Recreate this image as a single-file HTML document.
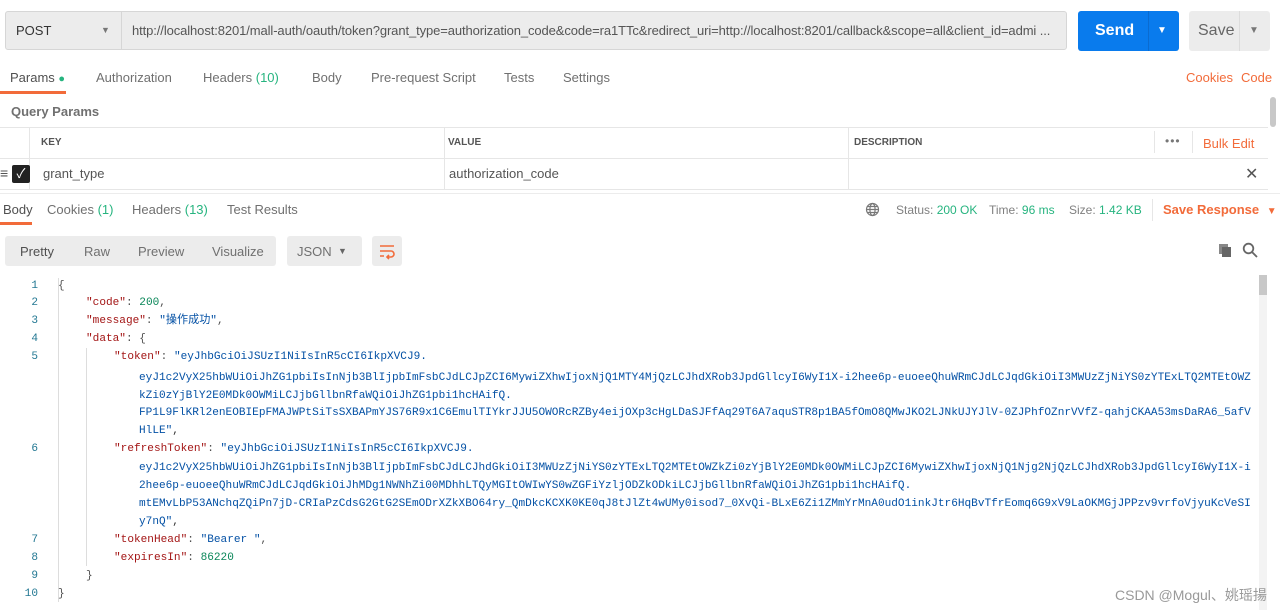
<!DOCTYPE html>
<html><head><meta charset="utf-8">
<style>
*{box-sizing:border-box;margin:0;padding:0}
body{width:1280px;height:610px;overflow:hidden;background:#fff;font-family:"Liberation Sans","Noto Sans CJK SC",sans-serif;color:#505050;position:relative;font-size:13px}
.a{position:absolute;white-space:nowrap}
.tab{color:#707070;font-size:13px}
.g{color:#26b47f}
.o{color:#f26b3a}
.code{font-family:"Liberation Mono","Noto Sans CJK SC",monospace;font-size:11.1px;line-height:18px}
.ln{color:#237893;width:38px;text-align:right;left:0}
.k{color:#a31515}.s{color:#0451a5}.n{color:#098658}
</style></head><body>
<!-- top bar -->
<div class="a" style="left:5px;top:11px;width:1062px;height:39px;background:#ececec;border:1px solid #d6d6d6;border-radius:3px"></div>
<div class="a" style="left:121px;top:11px;width:1px;height:39px;background:#d6d6d6"></div>
<div class="a" style="left:16px;top:23px;font-size:13px;color:#333">POST</div>
<div class="a" style="left:101px;top:25px;font-size:9px;color:#777">▼</div>
<div class="a" style="left:132px;top:23px;font-size:13px;color:#555;letter-spacing:-0.1px">http://localhost:8201/mall-auth/oauth/token?grant_type=authorization_code&amp;code=ra1TTc&amp;redirect_uri=http://localhost:8201/callback&amp;scope=all&amp;client_id=admi ...</div>
<div class="a" style="left:1078px;top:11px;width:101px;height:40px;background:#097bed;border-radius:3px"></div>
<div class="a" style="left:1148px;top:11px;width:1px;height:40px;background:#0a6bd0"></div>
<div class="a" style="left:1095px;top:22px;font-size:16px;font-weight:bold;color:#fff">Send</div>
<div class="a" style="left:1157px;top:25px;font-size:10px;color:#fff">▼</div>
<div class="a" style="left:1189px;top:11px;width:81px;height:40px;background:#ececec;border-radius:3px"></div>
<div class="a" style="left:1239px;top:11px;width:1px;height:40px;background:#dcdcdc"></div>
<div class="a" style="left:1198px;top:22px;font-size:16px;color:#666">Save</div>
<div class="a" style="left:1249px;top:25px;font-size:10px;color:#777">▼</div>
<!-- request tabs -->
<div class="a tab" style="left:10px;top:70px;color:#505050">Params <span class="g" style="font-size:11px">●</span></div>
<div class="a" style="left:0;top:91px;width:66px;height:3px;background:#f26b3a"></div>
<div class="a tab" style="left:96px;top:70px">Authorization</div>
<div class="a tab" style="left:203px;top:70px">Headers <span class="g">(10)</span></div>
<div class="a tab" style="left:312px;top:70px">Body</div>
<div class="a tab" style="left:371px;top:70px">Pre-request Script</div>
<div class="a tab" style="left:504px;top:70px">Tests</div>
<div class="a tab" style="left:563px;top:70px">Settings</div>
<div class="a o" style="left:1186px;top:70px">Cookies</div>
<div class="a o" style="left:1241px;top:70px">Code</div>
<div class="a" style="left:11px;top:104px;font-size:13px;font-weight:bold;color:#707070">Query Params</div>
<div class="a" style="left:1270px;top:97px;width:6px;height:30px;background:#c8c8c8;border-radius:3px"></div>
<!-- table -->
<div class="a" style="left:0;top:127px;width:1268px;height:1px;background:#e6e6e6"></div>
<div class="a" style="left:0;top:158px;width:1268px;height:1px;background:#e6e6e6"></div>
<div class="a" style="left:0;top:189px;width:1268px;height:1px;background:#e6e6e6"></div>
<div class="a" style="left:29px;top:127px;width:1px;height:63px;background:#e6e6e6"></div>
<div class="a" style="left:444px;top:127px;width:1px;height:63px;background:#e6e6e6"></div>
<div class="a" style="left:848px;top:127px;width:1px;height:63px;background:#e6e6e6"></div>
<div class="a" style="left:1154px;top:131px;width:1px;height:22px;background:#e6e6e6"></div>
<div class="a" style="left:1192px;top:131px;width:1px;height:22px;background:#e6e6e6"></div>
<div class="a" style="left:41px;top:137px;font-size:10px;font-weight:bold;color:#555">KEY</div>
<div class="a" style="left:448px;top:137px;font-size:10px;font-weight:bold;color:#555">VALUE</div>
<div class="a" style="left:854px;top:137px;font-size:10px;font-weight:bold;color:#555">DESCRIPTION</div>
<div class="a" style="left:1165px;top:134px;font-size:12px;color:#777;letter-spacing:1px">•••</div>
<div class="a o" style="left:1203px;top:136px">Bulk Edit</div>
<div class="a" style="left:0;top:165px;font-size:14px;color:#555">≡</div>
<div class="a" style="left:12px;top:165px;width:18px;height:18px;background:#222;border-radius:2px;color:#fff;font-size:13px;text-align:center;line-height:18px">✓</div>
<div class="a" style="left:43px;top:166px;color:#555">grant_type</div>
<div class="a" style="left:449px;top:166px;color:#555">authorization_code</div>
<div class="a" style="left:1245px;top:164px;font-size:16px;color:#555">✕</div>
<!-- response tabs -->
<div class="a" style="left:0;top:193px;width:1280px;height:1px;background:#ececec"></div>
<div class="a tab" style="left:3px;top:202px;color:#505050">Body</div>
<div class="a" style="left:0;top:222px;width:32px;height:3px;background:#f26b3a"></div>
<div class="a tab" style="left:47px;top:202px">Cookies <span class="g">(1)</span></div>
<div class="a tab" style="left:132px;top:202px">Headers <span class="g">(13)</span></div>
<div class="a tab" style="left:227px;top:202px">Test Results</div>
<svg class="a" style="left:865px;top:202px" width="15" height="15" viewBox="0 0 15 15" fill="none" stroke="#777" stroke-width="1.2"><circle cx="7.5" cy="7.5" r="6"/><ellipse cx="7.5" cy="7.5" rx="2.6" ry="6"/><path d="M1.5 7.5h12M2.5 4.5h10M2.5 10.5h10"/></svg>
<div class="a" style="left:896px;top:203px;font-size:12px;color:#808080">Status: <span class="g">200 OK</span></div>
<div class="a" style="left:989px;top:203px;font-size:12px;color:#808080">Time: <span class="g">96 ms</span></div>
<div class="a" style="left:1069px;top:203px;font-size:12px;color:#808080">Size: <span class="g">1.42 KB</span></div>
<div class="a" style="left:1152px;top:199px;width:1px;height:22px;background:#e6e6e6"></div>
<div class="a o" style="left:1163px;top:202px;font-weight:bold">Save Response <span style="font-size:10px;margin-left:4px">▼</span></div>
<!-- view toolbar -->
<div class="a" style="left:5px;top:236px;width:271px;height:30px;background:#ececec;border-radius:3px"></div>
<div class="a tab" style="left:20px;top:244px;color:#505050">Pretty</div>
<div class="a tab" style="left:84px;top:244px">Raw</div>
<div class="a tab" style="left:138px;top:244px">Preview</div>
<div class="a tab" style="left:212px;top:244px">Visualize</div>
<div class="a" style="left:287px;top:236px;width:75px;height:30px;background:#ececec;border-radius:3px"></div>
<div class="a tab" style="left:297px;top:244px">JSON</div>
<div class="a" style="left:338px;top:246px;font-size:9px;color:#666">▼</div>
<div class="a" style="left:372px;top:236px;width:30px;height:30px;background:#ececec;border-radius:3px"></div>
<svg class="a" style="left:378px;top:242px" width="18" height="18" viewBox="0 0 18 18" fill="none" stroke="#f26b3a" stroke-width="1.6"><path d="M2 4h14M2 9h11a3 3 0 0 1 0 6H9M11 13l-2 2 2 2M2 14h4"/></svg>
<svg class="a" style="left:1217px;top:242px" width="16" height="16" viewBox="0 0 16 16"><rect x="2" y="2" width="9" height="10" fill="#888"/><rect x="5" y="5" width="9" height="10" fill="#666"/></svg>
<svg class="a" style="left:1242px;top:242px" width="16" height="16" viewBox="0 0 16 16" fill="none" stroke="#666" stroke-width="1.8"><circle cx="6.5" cy="6.5" r="4.8"/><path d="M10 10l5 5"/></svg>
<!-- code -->
<div class="a" style="left:1259px;top:275px;width:8px;height:335px;background:#f3f3f3"></div>
<div class="a" style="left:1259px;top:275px;width:8px;height:20px;background:#c8c8c8"></div>
<div class="a" style="left:58px;top:278px;width:1px;height:324px;background:#ddd"></div>
<div class="a" style="left:86px;top:348px;width:1px;height:218px;background:#ddd"></div>
<div class="code">
<div class="a ln" style="top:277px">1</div><div class="a" style="left:58px;top:277px">{</div>
<div class="a ln" style="top:294px">2</div><div class="a" style="left:86px;top:294px"><span class="k">"code"</span>: <span class="n">200</span>,</div>
<div class="a ln" style="top:312px">3</div><div class="a" style="left:86px;top:312px"><span class="k">"message"</span>: <span class="s">"操作成功"</span>,</div>
<div class="a ln" style="top:330px">4</div><div class="a" style="left:86px;top:330px"><span class="k">"data"</span>: {</div>
<div class="a ln" style="top:348px">5</div><div class="a" style="left:114px;top:348px"><span class="k">"token"</span>: <span class="s">"eyJhbGciOiJSUzI1NiIsInR5cCI6IkpXVCJ9.</span></div>
<div class="a s" style="left:139px;top:369px">eyJ1c2VyX25hbWUiOiJhZG1pbiIsInNjb3BlIjpbImFsbCJdLCJpZCI6MywiZXhwIjoxNjQ1MTY4MjQzLCJhdXRob3JpdGllcyI6WyI1X-i2hee6p-euoeeQhuWRmCJdLCJqdGkiOiI3MWUzZjNiYS0zYTExLTQ2MTEtOWZ</div>
<div class="a s" style="left:139px;top:387px">kZi0zYjBlY2E0MDk0OWMiLCJjbGllbnRfaWQiOiJhZG1pbi1hcHAifQ.</div>
<div class="a s" style="left:139px;top:404px">FP1L9FlKRl2enEOBIEpFMAJWPtSiTsSXBAPmYJS76R9x1C6EmulTIYkrJJU5OWORcRZBy4eijOXp3cHgLDaSJFfAq29T6A7aquSTR8p1BA5fOmO8QMwJKO2LJNkUJYJlV-0ZJPhfOZnrVVfZ-qahjCKAA53msDaRA6_5afV</div>
<div class="a s" style="left:139px;top:422px">HlLE"<span style="color:#333">,</span></div>
<div class="a ln" style="top:440px">6</div><div class="a" style="left:114px;top:440px"><span class="k">"refreshToken"</span>: <span class="s">"eyJhbGciOiJSUzI1NiIsInR5cCI6IkpXVCJ9.</span></div>
<div class="a s" style="left:139px;top:459px">eyJ1c2VyX25hbWUiOiJhZG1pbiIsInNjb3BlIjpbImFsbCJdLCJhdGkiOiI3MWUzZjNiYS0zYTExLTQ2MTEtOWZkZi0zYjBlY2E0MDk0OWMiLCJpZCI6MywiZXhwIjoxNjQ1Njg2NjQzLCJhdXRob3JpdGllcyI6WyI1X-i</div>
<div class="a s" style="left:139px;top:477px">2hee6p-euoeeQhuWRmCJdLCJqdGkiOiJhMDg1NWNhZi00MDhhLTQyMGItOWIwYS0wZGFiYzljODZkODkiLCJjbGllbnRfaWQiOiJhZG1pbi1hcHAifQ.</div>
<div class="a s" style="left:139px;top:495px">mtEMvLbP53ANchqZQiPn7jD-CRIaPzCdsG2GtG2SEmODrXZkXBO64ry_QmDkcKCXK0KE0qJ8tJlZt4wUMy0isod7_0XvQi-BLxE6Zi1ZMmYrMnA0udO1inkJtr6HqBvTfrEomq6G9xV9LaOKMGjJPPzv9vrfoVjyuKcVeSI</div>
<div class="a s" style="left:139px;top:513px">y7nQ"<span style="color:#333">,</span></div>
<div class="a ln" style="top:531px">7</div><div class="a" style="left:114px;top:531px"><span class="k">"tokenHead"</span>: <span class="s">"Bearer "</span>,</div>
<div class="a ln" style="top:549px">8</div><div class="a" style="left:114px;top:549px"><span class="k">"expiresIn"</span>: <span class="n">86220</span></div>
<div class="a ln" style="top:567px">9</div><div class="a" style="left:86px;top:567px">}</div>
<div class="a ln" style="top:585px">10</div><div class="a" style="left:58px;top:585px">}</div>
</div>
<div class="a" style="left:1115px;top:585px;font-size:14px;color:#999">CSDN @Mogul、姚瑶揚</div>
</body></html>
